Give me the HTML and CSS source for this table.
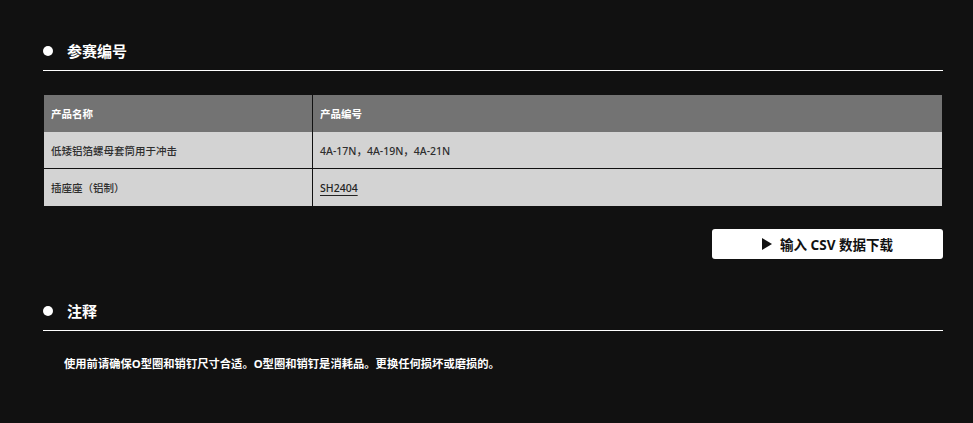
FILE: index.html
```html
<!DOCTYPE html>
<html lang="zh">
<head>
<meta charset="utf-8">
<title>参赛编号</title>
<link rel="stylesheet" href="styles.css">
</head>
<body>
<main class="page">
  <h2 class="sec-title first"><span class="dot"></span>参赛编号</h2>
  <table class="spec">
    <thead>
      <tr><th class="c1">产品名称</th><th class="c2">产品编号</th></tr>
    </thead>
    <tbody>
      <tr><td class="c1">低矮铝箔螺母套筒用于冲击</td><td class="c2">4A-17N，4A-19N，4A-21N</td></tr>
      <tr><td class="c1">插座座（铝制）</td><td class="c2"><a class="code-link" href="#">SH2404</a></td></tr>
    </tbody>
  </table>
  <div class="actions">
    <button class="csv-btn" type="button"><span class="tri"></span>输入 CSV 数据下载</button>
  </div>
  <h2 class="sec-title second"><span class="dot"></span>注释</h2>
  <p class="note">使用前请确保O型圈和销钉尺寸合适。O型圈和销钉是消耗品。更换任何损坏或磨损的。</p>
</main>
</body>
</html>
```
FILE: styles.css
```css
html, body {
  margin: 0;
  padding: 0;
  background: #111111;
}
body {
  font-family: "Noto Sans", "Noto Sans CJK SC", sans-serif;
  color: #ffffff;
}
.page {
  width: 900px;
  margin-left: 43px;
  padding: 0;
}
.sec-title {
  display: flex;
  align-items: center;
  margin: 0;
  padding: 0 0 6px 0;
  height: 26px;
  line-height: 26px;
  font-size: 15px;
  font-weight: 700;
  color: #ffffff;
  border-bottom: 1px solid #ffffff;
  box-sizing: content-box;
}
.sec-title.first {
  padding-top: 38px;
}
.sec-title.second {
  margin-top: 39px;
}
.dot {
  display: inline-block;
  width: 10px;
  height: 10px;
  border-radius: 50%;
  background: #ffffff;
  margin-right: 14px;
}
.spec {
  width: 900px;
  margin-top: 23px;
  border-collapse: collapse;
  border: 1px solid #111111;
  font-size: 10.5px;
}
.spec th {
  background: #737373;
  color: #ffffff;
  font-weight: 700;
  text-align: left;
  height: 37px;
  padding: 0 7px;
}
.spec td {
  background: #d3d3d3;
  color: #2e2e2e;
  height: 36px;
  padding: 0 7px;
  font-weight: 500;
}
.spec tbody tr + tr td {
  border-top: 1px solid #111111;
  height: 37px;
}
.spec .c1 {
  width: 254px;
}
.spec .c2 {
  border-left: 1px solid #111111;
}
.code-link {
  color: #222222;
  text-decoration: underline;
  text-underline-offset: 3px;
}
.actions {
  display: flex;
  justify-content: flex-end;
  margin-top: 22px;
}
.csv-btn {
  width: 231px;
  height: 30px;
  border: none;
  border-radius: 3px;
  background: #ffffff;
  color: #111111;
  font-family: "Noto Sans", "Noto Sans CJK SC", sans-serif;
  font-size: 13.5px;
  font-weight: 700;
  display: flex;
  align-items: center;
  justify-content: center;
  padding: 0;
}
.tri {
  display: inline-block;
  width: 0;
  height: 0;
  border-top: 6px solid transparent;
  border-bottom: 6px solid transparent;
  border-left: 10px solid #111111;
  margin-right: 8px;
}
.note {
  margin: 23px 0 0 0;
  padding-left: 21px;
  line-height: 20px;
  font-size: 11.3px;
  font-weight: 700;
  color: #ffffff;
}
```
